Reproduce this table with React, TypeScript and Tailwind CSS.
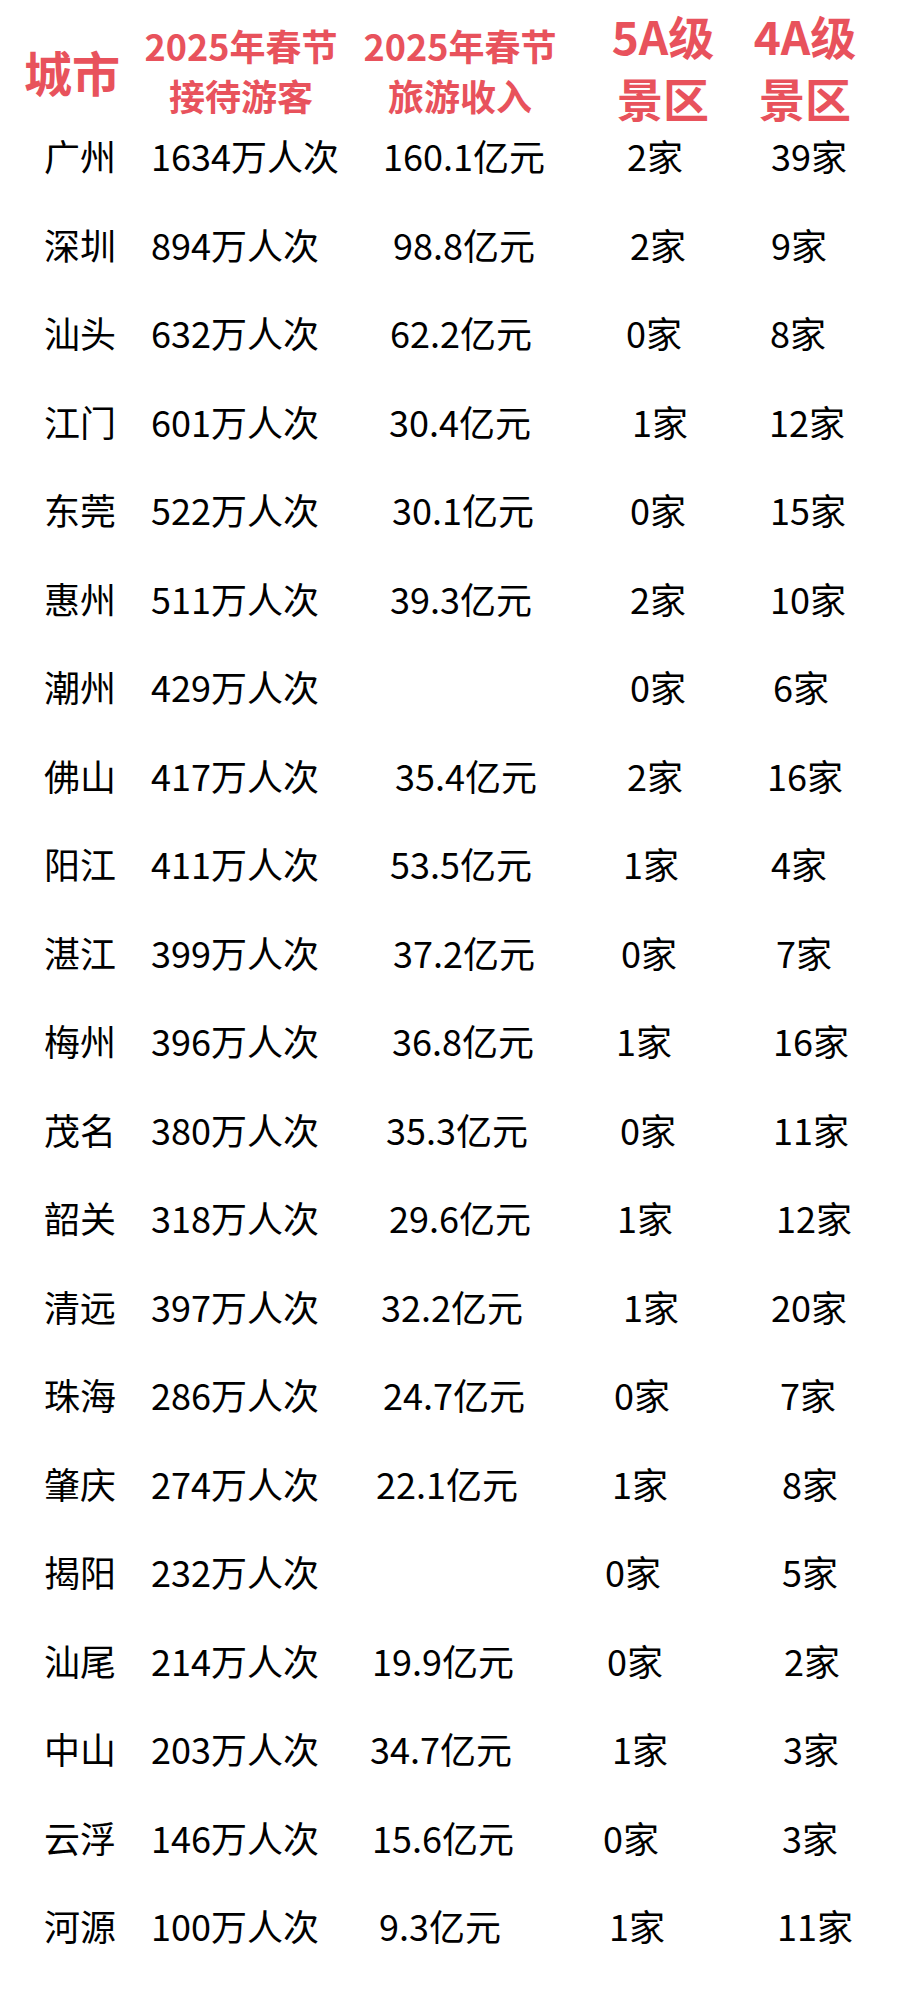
import React from 'react'

type Row = {
  city: string
  visitors: string
  revenue: string
  a5: string
  a4: string
  revPad: string
  a5Pad: string
  a4Pad: string
}

// per-row offsets follow the hand-spaced source table
const rows: Row[] = [
  { city: '广州', visitors: '1634万人次', revenue: '160.1亿元', a5: '2家', a4: '39家', revPad: 'pl-[15px]', a5Pad: 'pl-[27px]', a4Pad: 'pl-[6px]' },
  { city: '深圳', visitors: '894万人次', revenue: '98.8亿元', a5: '2家', a4: '9家', revPad: 'pl-[25px]', a5Pad: 'pl-[30px]', a4Pad: 'pl-[6px]' },
  { city: '汕头', visitors: '632万人次', revenue: '62.2亿元', a5: '0家', a4: '8家', revPad: 'pl-[22px]', a5Pad: 'pl-[26px]', a4Pad: 'pl-[5px]' },
  { city: '江门', visitors: '601万人次', revenue: '30.4亿元', a5: '1家', a4: '12家', revPad: 'pl-[21px]', a5Pad: 'pl-[32px]', a4Pad: 'pl-[4px]' },
  { city: '东莞', visitors: '522万人次', revenue: '30.1亿元', a5: '0家', a4: '15家', revPad: 'pl-[24px]', a5Pad: 'pl-[30px]', a4Pad: 'pl-[5px]' },
  { city: '惠州', visitors: '511万人次', revenue: '39.3亿元', a5: '2家', a4: '10家', revPad: 'pl-[22px]', a5Pad: 'pl-[30px]', a4Pad: 'pl-[5px]' },
  { city: '潮州', visitors: '429万人次', revenue: '', a5: '0家', a4: '6家', revPad: 'pl-0', a5Pad: 'pl-[30px]', a4Pad: 'pl-[8px]' },
  { city: '佛山', visitors: '417万人次', revenue: '35.4亿元', a5: '2家', a4: '16家', revPad: 'pl-[27px]', a5Pad: 'pl-[27px]', a4Pad: 'pl-[2px]' },
  { city: '阳江', visitors: '411万人次', revenue: '53.5亿元', a5: '1家', a4: '4家', revPad: 'pl-[22px]', a5Pad: 'pl-[23px]', a4Pad: 'pl-[6px]' },
  { city: '湛江', visitors: '399万人次', revenue: '37.2亿元', a5: '0家', a4: '7家', revPad: 'pl-[25px]', a5Pad: 'pl-[21px]', a4Pad: 'pl-[11px]' },
  { city: '梅州', visitors: '396万人次', revenue: '36.8亿元', a5: '1家', a4: '16家', revPad: 'pl-[24px]', a5Pad: 'pl-[16px]', a4Pad: 'pl-[8px]' },
  { city: '茂名', visitors: '380万人次', revenue: '35.3亿元', a5: '0家', a4: '11家', revPad: 'pl-[18px]', a5Pad: 'pl-[20px]', a4Pad: 'pl-[8px]' },
  { city: '韶关', visitors: '318万人次', revenue: '29.6亿元', a5: '1家', a4: '12家', revPad: 'pl-[21px]', a5Pad: 'pl-[17px]', a4Pad: 'pl-[11px]' },
  { city: '清远', visitors: '397万人次', revenue: '32.2亿元', a5: '1家', a4: '20家', revPad: 'pl-[13px]', a5Pad: 'pl-[23px]', a4Pad: 'pl-[6px]' },
  { city: '珠海', visitors: '286万人次', revenue: '24.7亿元', a5: '0家', a4: '7家', revPad: 'pl-[15px]', a5Pad: 'pl-[14px]', a4Pad: 'pl-[15px]' },
  { city: '肇庆', visitors: '274万人次', revenue: '22.1亿元', a5: '1家', a4: '8家', revPad: 'pl-[8px]', a5Pad: 'pl-[12px]', a4Pad: 'pl-[17px]' },
  { city: '揭阳', visitors: '232万人次', revenue: '', a5: '0家', a4: '5家', revPad: 'pl-0', a5Pad: 'pl-[5px]', a4Pad: 'pl-[17px]' },
  { city: '汕尾', visitors: '214万人次', revenue: '19.9亿元', a5: '0家', a4: '2家', revPad: 'pl-[4px]', a5Pad: 'pl-[7px]', a4Pad: 'pl-[19px]' },
  { city: '中山', visitors: '203万人次', revenue: '34.7亿元', a5: '1家', a4: '3家', revPad: 'pl-[2px]', a5Pad: 'pl-[12px]', a4Pad: 'pl-[18px]' },
  { city: '云浮', visitors: '146万人次', revenue: '15.6亿元', a5: '0家', a4: '3家', revPad: 'pl-[4px]', a5Pad: 'pl-[3px]', a4Pad: 'pl-[17px]' },
  { city: '河源', visitors: '100万人次', revenue: '9.3亿元', a5: '1家', a4: '11家', revPad: 'pl-[11px]', a5Pad: 'pl-[9px]', a4Pad: 'pl-[12px]' },
]

const font = 'font-["Noto_Sans_CJK_SC",sans-serif]'

export default function App() {
  return (
    <div className={`w-[905px] min-h-[1998px] bg-white ${font}`}>
      {/* 表头 */}
      <div className="flex h-[111px] font-bold text-[#e8525c] whitespace-nowrap">
        <div className="w-[141px] pl-[24px] pt-[30px] flex items-center text-[48px] leading-none">
          城市
        </div>
        <div className="w-[200px] flex flex-col items-center pt-[20px] text-[36px] leading-[50px]">
          <span>2025年春节</span>
          <span>接待游客</span>
        </div>
        <div className="ml-[19px] w-[200px] flex flex-col items-center pt-[20px] text-[36px] leading-[50px]">
          <span>2025年春节</span>
          <span>旅游收入</span>
        </div>
        <div className="ml-[38px] w-[130px] flex flex-col items-center pt-[4px] text-[46px] leading-[62px]">
          <span>5A级</span>
          <span>景区</span>
        </div>
        <div className="ml-[12px] w-[130px] flex flex-col items-center pt-[4px] text-[46px] leading-[62px]">
          <span>4A级</span>
          <span>景区</span>
        </div>
      </div>

      {/* 数据行 */}
      {rows.map((r) => (
        <div key={r.city} className="flex items-center h-[88.5px] text-[36px] text-black whitespace-nowrap leading-none">
          <div className="w-[151px] pl-[44px]">{r.city}</div>
          <div className="w-[217px]">{r.visitors}</div>
          <div className={`w-[232px] ${r.revPad}`}>{r.revenue}</div>
          <div className={`w-[165px] ${r.a5Pad}`}>{r.a5}</div>
          <div className={`w-[140px] ${r.a4Pad}`}>{r.a4}</div>
        </div>
      ))}
    </div>
  )
}
